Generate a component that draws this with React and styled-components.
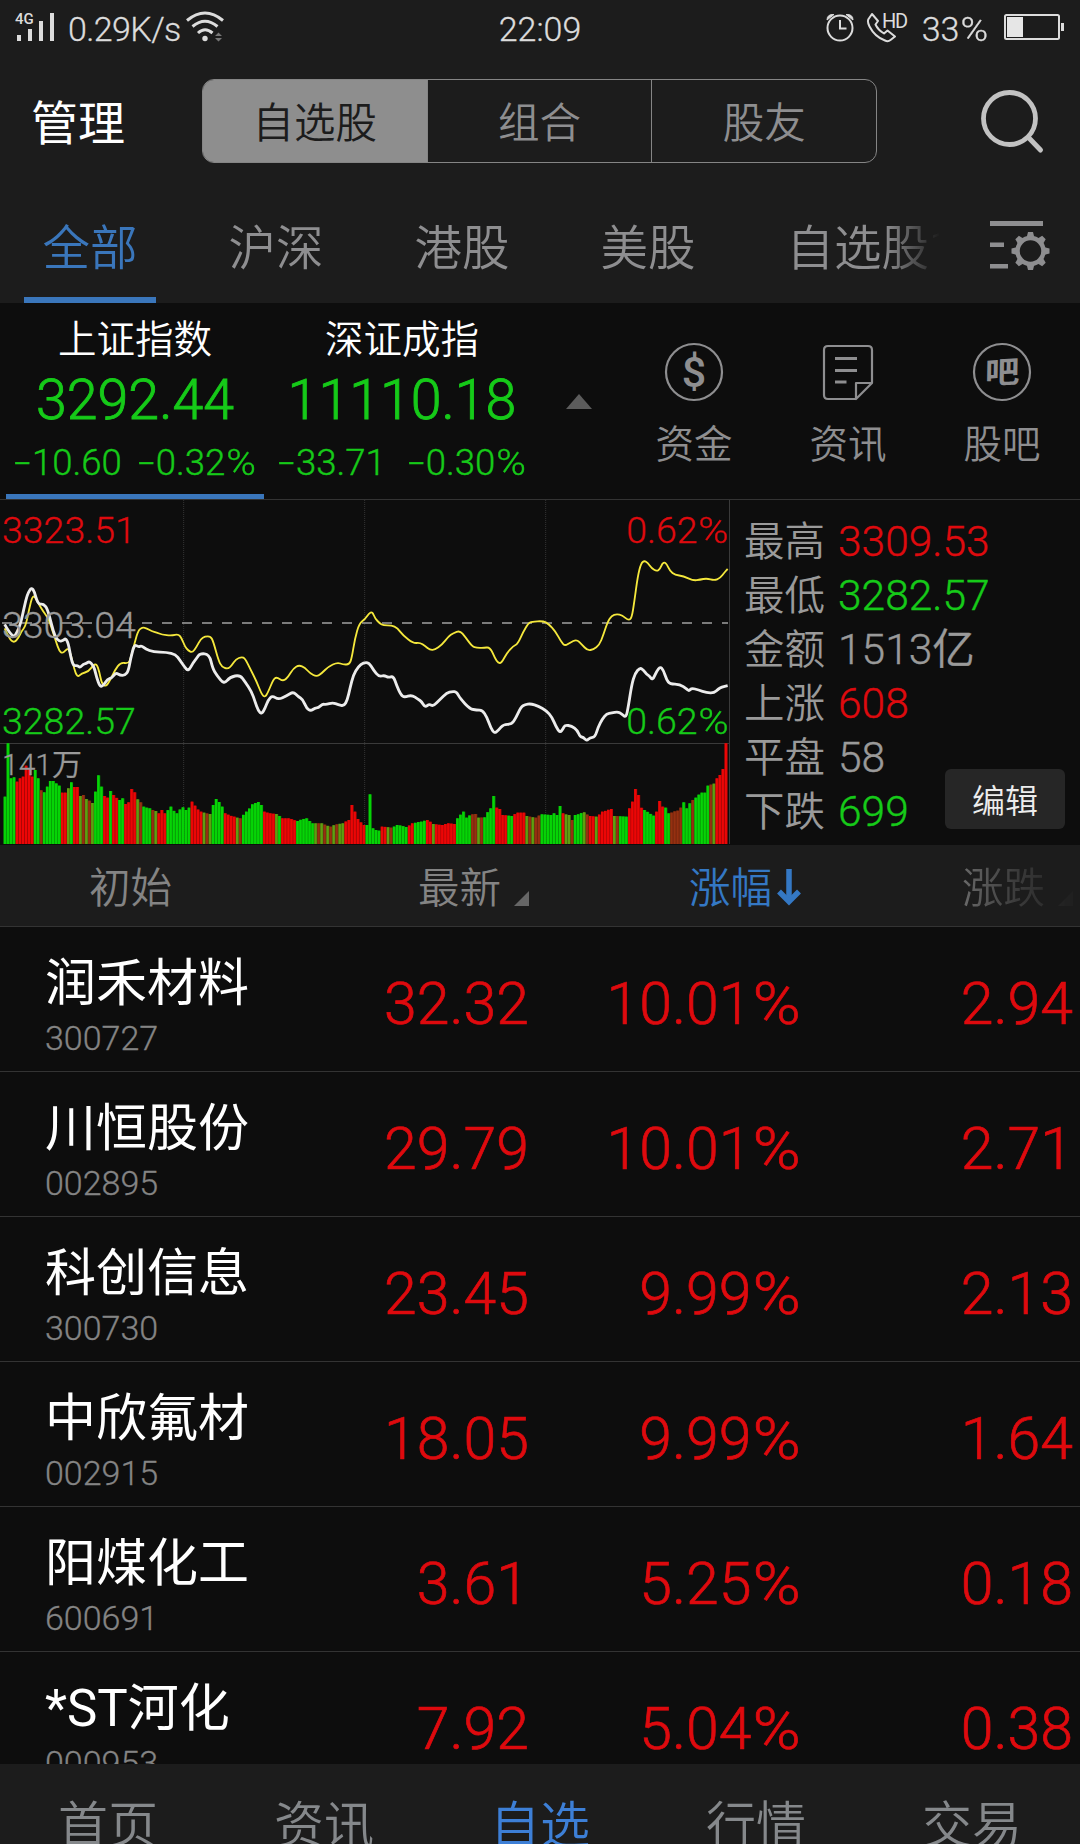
import React from "react";
import styled, { createGlobalStyle } from "styled-components";

const GlobalStyle = createGlobalStyle`
  * { box-sizing: border-box; }
  body { margin: 0; background: #0d0d0d; overflow: hidden; }
`;

const color = {
  bar: "#1c1c1c",
  body: "#0d0d0d",
  line: "#333333",
  grey: "#8e8e90",
  blue: "#3a76bb",
  red: "#de0a0e",
  green: "#16ca19",
};

const Screen = styled.div`
  width: 1080px;
  height: 1844px;
  display: flex;
  flex-direction: column;
  overflow: hidden;
  background: ${color.body};
  color: #fff;
  font-family: Roboto, "Noto Sans CJK SC", sans-serif;
  font-weight: 350;
  white-space: nowrap;
`;

/* ---------- figures ---------- */

const PercentSign = styled.span`
  display: inline-block;
  margin-left: 0.1em;
  transform: scaleX(1.1);
  transform-origin: 100% 50%;
`;

// Sets the percent sign a little wider than the digits before it.
const Num = ({ children }) =>
  children.endsWith("%") ? (
    <span>{children.slice(0, -1)}<PercentSign>%</PercentSign></span>
  ) : (
    <span>{children}</span>
  );

/* ---------- status bar ---------- */

const StatusBar = styled.div`
  flex: none;
  height: 58px;
  padding: 0 15px;
  display: grid;
  grid-template-columns: 1fr auto 1fr;
  align-items: center;
  background: ${color.bar};
  color: #dcdcdc;
  font-size: 34px;
  line-height: 58px;
  svg { display: block; }
`;

const StatusSide = styled.div`
  display: flex;
  align-items: center;
  justify-content: ${(p) => (p.$end ? "flex-end" : "flex-start")};
`;

const StatusText = styled.span`
  letter-spacing: ${(p) => p.$spacing || 0}px;
  margin: ${(p) => p.$margin || 0};
  -webkit-text-stroke: 0.3px currentColor;
`;

const SignalIcon = () => (
  <svg width="42" height="58" viewBox="0 0 42 58">
    <text x="0" y="24" fontSize="15" fontWeight="500" fill="#dcdcdc">4G</text>
    <g fill="#dcdcdc">
      <rect x="2" y="35" width="4" height="6" />
      <rect x="13" y="29" width="4" height="12" />
      <rect x="24" y="21" width="4" height="20" />
      <rect x="35" y="13" width="4" height="28" />
    </g>
  </svg>
);

const WifiIcon = () => (
  <svg width="40" height="58" viewBox="0 0 40 58" fill="none" stroke="#dcdcdc">
    <path d="M1 20.5Q19 5.500 37 20.5" strokeWidth="3" />
    <path d="M6.500 26.500Q19 16 31.500 26.500" strokeWidth="3" />
    <path d="M12 33Q19 26.500 26.500 33" strokeWidth="3" />
    <circle cx="19" cy="38.500" r="2.700" fill="#dcdcdc" stroke="none" />
    <path d="M29 36l3.500-3.500L36 36zM29 38l3.500 3.500L36 38z" fill="#777" stroke="none" />
  </svg>
);

const AlarmIcon = () => (
  <svg width="30" height="58" viewBox="0 0 30 58" fill="none" stroke="#dcdcdc" strokeWidth="2">
    <circle cx="15" cy="28" r="12.500" />
    <path d="M15 20v8.500h6.500" />
    <path d="M2 20q0-6 7-5.500zM28 20q0-6-7-5.500z" fill="#dcdcdc" strokeWidth="1" />
  </svg>
);

const CallSvg = styled.svg`
  margin: 0 12px 0 11px;
`;

const CallIcon = () => (
  <CallSvg width="44" height="58" viewBox="0 0 44 58" fill="none" stroke="#dcdcdc" strokeWidth="2">
    <path d="M6 14L2.500 19Q1 21.500 3.500 26.500Q9 37 19 40.500Q22 42 24.500 40L29 36.500L21.500 30.500L18 33.500Q12 30 9.500 24.500L12 21z" strokeLinejoin="round" />
    <text x="16" y="28" fontSize="20" fontWeight="400" fill="#dcdcdc" stroke="none" textLength="26">HD</text>
  </CallSvg>
);

const BatteryIcon = () => (
  <svg width="61" height="58" viewBox="0 0 61 58">
    <rect x="1" y="15" width="54" height="24" rx="1.500" fill="none" stroke="#dcdcdc" strokeWidth="2" />
    <rect x="3" y="17" width="16" height="20" fill="#e6e6e6" />
    <rect x="57" y="23" width="3" height="8" fill="#dcdcdc" />
  </svg>
);

/* ---------- header ---------- */

const Header = styled.header`
  flex: none;
  height: 126px;
  padding: 0 35px 0 31px;
  display: flex;
  align-items: center;
  background: ${color.bar};
`;

const Manage = styled.button`
  all: unset;
  width: 171px;
  font-size: 47px;
  font-weight: 400;
  line-height: 60px;
  padding-top: 6px;
`;

const Segments = styled.div`
  display: flex;
  width: 675px;
  height: 84px;
  border: 1px solid #858585;
  border-radius: 12px;
  overflow: hidden;
`;

const Segment = styled.div`
  flex: 1;
  display: flex;
  align-items: center;
  justify-content: center;
  padding-bottom: 2px;
  font-size: 41.500px;
  color: ${(p) => (p.$active ? "#1c1c1c" : color.grey)};
  background: ${(p) => (p.$active ? "#8e8e8e" : "transparent")};
  & + & { border-left: 1px solid #858585; }
`;

const SearchButton = styled.button`
  all: unset;
  margin-left: auto;
  svg { display: block; }
`;

const SearchIcon = () => (
  <svg width="66" height="66" viewBox="0 0 66 66" fill="none" stroke="#c2c2c2">
    <circle cx="30.500" cy="30.500" r="26" strokeWidth="4.800" />
    <path d="M49.500 49.500L61.500 62" strokeWidth="5" strokeLinecap="round" />
  </svg>
);

/* ---------- market tabs ---------- */

const TabBar = styled.nav`
  flex: none;
  height: 119px;
  display: flex;
  justify-content: space-between;
  background: ${color.bar};
`;

const Tabs = styled.div`
  width: 945px;
  display: flex;
  overflow: hidden;
  mask-image: linear-gradient(to right, #000 885px, transparent 940px);
`;

const Tab = styled.div`
  flex: none;
  display: flex;
  flex-direction: column;
  align-items: center;
  padding: 0 27px;
  font-size: 47.500px;
  color: ${(p) => (p.$active ? color.blue : color.grey)};
  &:first-child { margin-left: -3px; }
  span { flex: 1; padding: 17px 18.5px 0; line-height: 96px; }
  &::after {
    content: "";
    flex: none;
    align-self: stretch;
    height: 6px;
    background: ${(p) => (p.$active ? color.blue : "transparent")};
  }
`;

const TabSettings = styled.div`
  width: 90px;
  padding-top: 35px;
`;

const teeth = [0, 45, 90, 135, 180, 225, 270, 315];

const ListSettingsIcon = () => (
  <svg width="60" height="54" viewBox="0 0 60 54">
    <g fill={color.grey}>
      <rect x="0" y="2" width="53" height="5" />
      <rect x="0" y="23.500" width="14" height="4.500" />
      <rect x="0" y="45" width="18" height="4.500" />
      {teeth.map((a) => (
        <path key={a} d="M36.500 19l1.500-6h5l1.500 6z" transform={`rotate(${a} 40.500 32)`} />
      ))}
    </g>
    <circle cx="40.500" cy="32" r="13" fill="none" stroke={color.grey} strokeWidth="4.500" />
  </svg>
);

/* ---------- index summary ---------- */

const Summary = styled.section`
  flex: none;
  height: 196px;
  padding-left: 6px;
  display: flex;
`;

const IndexCard = styled.div`
  width: 258px;
  margin-right: 9px;
  padding-top: 9px;
  display: flex;
  flex-direction: column;
  align-items: center;
  color: ${color.green};
  border-bottom: 5px solid ${(p) => (p.$active ? color.blue : "transparent")};
`;

const IndexName = styled.div`
  color: #fff;
  font-size: 38.500px;
  line-height: 56px;
  height: 54px;
`;

const IndexValue = styled.div`
  font-size: 55.500px;
  line-height: 70px;
  -webkit-text-stroke: 0.9px currentColor;
`;

const IndexDelta = styled.div`
  display: flex;
  gap: ${(p) => p.$gap}px;
  font-size: 36.500px;
  line-height: 53px;
  -webkit-text-stroke: 0.4px currentColor;
`;

const Minus = styled.i`
  display: inline-block;
  width: 18px;
  font-style: normal;
  transform: scaleX(1.6);
  transform-origin: 0 50%;
`;

const Toggle = styled.div`
  width: 77px;
  display: flex;
  align-items: center;
  justify-content: center;
  padding-top: 1px;
  &::after {
    content: "";
    border: solid transparent;
    border-width: 0 13.5px 15px;
    border-bottom-color: #5c5c5c;
  }
`;

const Actions = styled.div`
  display: flex;
`;

const Action = styled.div`
  width: 154px;
  padding-top: 39px;
  display: flex;
  flex-direction: column;
  align-items: center;
  color: ${color.grey};
  font-size: 38.500px;
  line-height: 50px;
  svg { display: block; margin-bottom: 18px; }
`;

const MoneyIcon = () => (
  <svg width="60" height="60" viewBox="0 0 60 60">
    <circle cx="30" cy="30" r="28" fill="none" stroke={color.grey} strokeWidth="2.200" />
    <text x="30" y="45" fontSize="43" fontWeight="500" textAnchor="middle" fill={color.grey}>$</text>
  </svg>
);

const NewsIcon = () => (
  <svg width="60" height="60" viewBox="0 0 60 60" fill="none" stroke={color.grey} strokeWidth="2.200">
    <path d="M38 57H10Q6 57 6 53V8Q6 4 10 4H50Q54 4 54 8V41L38 57V41H54" strokeLinejoin="round" />
    <path d="M17 16.500H39M17 28.500H39M17 40H28.500" strokeWidth="3" />
  </svg>
);

const ForumIcon = () => (
  <svg width="60" height="60" viewBox="0 0 60 60">
    <circle cx="30" cy="30" r="28" fill="none" stroke={color.grey} strokeWidth="2.200" />
    <text
      x="0" y="0" fontSize="33" fontWeight="700" textAnchor="middle" fill={color.grey}
      transform="translate(30 41) rotate(-3) skewX(-4) scale(1.050 0.920)"
    >吧</text>
  </svg>
);

/* ---------- chart ---------- */

const ChartSection = styled.section`
  flex: none;
  height: 346px;
  border-top: 1px solid ${color.line};
  display: flex;
`;

const ChartBox = styled.div`
  position: relative;
  width: 730px;
  height: 345px;
  svg { display: block; }
`;

const ChartLabel = styled.span`
  position: absolute;
  top: ${(p) => p.$top}px;
  ${(p) => (p.$right ? "right: 1px" : "left: 2px")};
  font-size: ${(p) => p.$size || 37.5}px;
  line-height: 40px;
  color: ${(p) => p.$color};
  -webkit-text-stroke: 0.3px currentColor;
`;

// Chart coordinates are in thirds of a pixel; the viewBox scales them down.
const indexLine = [
  14,388,25,408,42,427,52,410,62,385,72,340,82,297,95,277,103,290,110,315,117,328,130,327,142,340,155,390,165,425,178,440,
  190,436,197,430,205,445,212,485,220,513,232,511,240,518,250,507,258,506,268,499,278,510,284,522,290,548,300,575,310,572,
  322,553,335,549,348,533,360,541,375,541,385,528,392,490,403,448,415,456,425,452,437,462,460,471,500,472,527,478,540,496,
  553,515,565,529,580,502,590,490,600,475,628,478,638,520,650,540,672,568,690,546,720,540,735,560,755,590,765,620,775,648,
  785,657,795,640,805,614,817,602,835,614,860,602,880,590,895,605,908,613,920,640,932,648,945,639,955,638,968,627,978,629,
  998,623,1015,629,1032,633,1042,615,1050,580,1060,540,1075,515,1090,503,1107,503,1120,525,1137,545,1153,541,1165,548,
  1180,543,1190,572,1203,600,1213,607,1235,600,1255,613,1265,620,1275,637,1288,627,1300,634,1320,613,1340,594,1357,589,
  1370,591,1380,610,1410,642,1430,645,1447,646,1460,665,1473,700,1483,715,1495,706,1510,688,1535,688,1547,670,1563,636,
  1575,629,1592,626,1615,633,1640,648,1655,665,1668,695,1680,714,1690,700,1695,690,1715,693,1732,706,1740,725,1750,727,
  1760,738,1770,728,1785,726,1795,695,1807,672,1820,656,1835,654,1853,650,1865,656,1878,669,1885,635,1895,570,1905,535,
  1920,518,1930,525,1940,538,1948,543,1958,556,1970,528,1981,515,1990,525,2000,555,2010,567,2040,568,2060,582,2067,588,
  2075,579,2095,585,2120,593,2142,594,2155,582,2165,576,2183,572,
];

const averageLine = [
  14,400,28,432,42,443,55,430,65,408,77,393,88,340,97,304,105,305,115,325,130,350,145,370,155,400,168,440,178,468,187,475,
  197,466,205,460,213,480,222,520,232,547,245,535,265,530,280,510,290,507,298,530,305,565,317,575,328,560,345,525,362,502,
  385,506,392,490,405,440,415,405,428,397,440,400,455,409,470,412,485,419,515,422,535,417,545,430,555,455,565,467,577,473,
  590,455,602,432,615,424,632,424,640,440,655,495,665,515,683,522,695,512,708,492,725,486,735,490,750,520,770,560,785,598,
  795,607,805,590,820,553,830,546,850,559,865,545,880,520,897,510,915,518,930,535,950,545,965,535,985,515,1012,502,
  1030,509,1048,508,1055,490,1065,430,1078,385,1095,373,1107,355,1117,350,1125,370,1140,386,1150,391,1175,391,1192,399,
  1210,422,1240,445,1260,443,1275,453,1290,465,1305,464,1325,450,1345,425,1360,414,1380,407,1395,425,1417,455,1430,458,
  1450,459,1470,456,1485,490,1495,505,1505,503,1520,475,1540,453,1553,447,1570,410,1585,385,1595,380,1630,378,1645,386,
  1667,410,1683,440,1695,453,1710,443,1730,433,1745,448,1763,467,1780,463,1798,450,1810,420,1823,380,1835,362,1850,357,
  1867,361,1885,376,1895,370,1903,320,1913,245,1923,205,1933,197,1943,203,1955,220,1970,229,1980,222,1988,203,1998,203,
  2010,228,2025,240,2050,243,2080,257,2100,254,2120,250,2143,256,2160,250,2175,230,2183,222,
];

const volumeTops = [
  15,905,24,745,33,850,42,847,51,860,60,850,69,845,78,812,87,822,96,845,105,825,114,850,123,886,132,892,141,875,150,858,
  160,858,178,872,187,893,196,893,205,880,214,862,223,876,232,876,241,903,250,900,259,912,268,917,277,924,286,890,295,841,
  304,875,313,903,322,908,331,888,340,900,358,915,367,910,376,927,385,922,394,882,403,892,412,913,421,922,430,935,448,940,
  466,948,475,955,484,945,498,955,511,935,529,955,547,937,556,945,565,938,574,920,583,932,601,950,628,957,637,930,648,912,
  657,921,666,935,675,955,700,965,720,970,740,950,760,928,772,921,785,930,793,950,810,955,830,957,850,970,870,970,890,978,
  918,970,940,985,965,985,990,995,1010,988,1030,985,1045,975,1055,930,1065,950,1075,972,1090,990,1099,990,1108,898,
  1117,1000,1125,1005,1140,1007,1150,995,1175,998,1195,990,1220,996,1240,985,1260,980,1285,975,1300,987,1325,990,1345,985,
  1367,987,1375,970,1388,950,1398,968,1415,958,1425,957,1440,968,1455,967,1470,940,1479,903,1488,938,1498,942,1510,960,
  1535,963,1553,953,1570,953,1580,963,1605,968,1625,958,1655,960,1663,955,1670,960,1677,933,1686,955,1705,960,1713,975,
  1730,960,1750,952,1770,963,1790,965,1810,950,1832,942,1845,963,1880,965,1890,940,1895,920,1903,882,1912,900,1920,935,
  1935,945,1960,962,1970,950,1976,918,1985,935,1995,938,2010,955,2030,947,2040,938,2048,922,2057,940,2070,925,2085,908,
  2105,893,2117,893,2128,872,2138,866,2148,850,2158,840,2165,822,2173,798,2182,745,
];

// Each run is the bar colour followed by the x at which the run ends.
const volumeRuns = `g46 r100 g120 b129 g183 r201 o210 g219 r237 o246 b255 o264 b273 o282 g309 r327 g336 r354 g372 r408
o417 b426 g453 b462 o471 r498 g570 r606 o615 b624 o633 g669 r705 o714 b723 g786 r822 o831 g840 r885 g939 o948 b957 o966
b975 o984 b1000 o1010 b1020 o1030 r1100 g1140 r1158 o1167 b1176 g1222 r1240 g1275 r1293 o1302 r1365 g1417 b1428 o1437
b1447 g1483 r1520 g1536 r1575 o1584 b1595 o1603 b1621 g1683 r1698 o1708 b1717 g1745 o1755 b1764 r1782 o1791 r1835 o1845
b1853 g1881 r1927 g1963 r1990 g2015 b2025 o2033 b2043 g2070 b2080 g2125 b2134 o2143 r2170 o2177 r2200`
  .split(/\s+/)
  .map((run) => ({ kind: run[0], end: Number(run.slice(1)) }));

const volumeFill = { g: "#06d406", r: "#ec0606", b: "#963010", o: "#5f9f10" };

const smooth = (flat) => {
  let d = `M${flat[0]} ${flat[1]}`;
  for (let i = 2; i < flat.length - 2; i += 2) {
    d += `Q${flat[i]} ${flat[i + 1]} ${(flat[i] + flat[i + 2]) / 2} ${(flat[i + 1] + flat[i + 3]) / 2}`;
  }
  return `${d}L${flat[flat.length - 2]} ${flat[flat.length - 1]}`;
};

const topAt = (x) => {
  for (let i = 0; i < volumeTops.length; i += 2) {
    if (Math.abs(volumeTops[i] - x) < 4.5) return volumeTops[i + 1];
  }
  for (let i = 2; i < volumeTops.length; i += 2) {
    if (volumeTops[i] >= x) {
      const t = (x - volumeTops[i - 2]) / (volumeTops[i] - volumeTops[i - 2]);
      return volumeTops[i - 1] + t * (volumeTops[i + 1] - volumeTops[i - 1]);
    }
  }
  return volumeTops[volumeTops.length - 1];
};

const BAR = 9.05;
const volumeBars = Array.from({ length: 240 }, (_, i) => {
  const x = 11 + i * BAR;
  const mid = x + BAR / 2;
  return { x, top: topAt(mid), fill: volumeFill[volumeRuns.find((r) => mid < r.end).kind] };
});

const IntradayChart = () => (
  <svg width="730" height="345" viewBox="0 15 2190 1035" fill="none">
    {[551, 1094, 1637].map((x) => (
      <path key={x} d={`M${x} 15V1047`} stroke="#333" strokeWidth="3" strokeDasharray="3 3" />
    ))}
    <path d="M2188.500 15V1047" stroke="#3a3a3a" strokeWidth="3" />
    <path d="M0 745.500H2188" stroke="#3a3a3a" strokeWidth="3" />
    <path d="M6 384H2184" stroke="#a0a0a0" strokeWidth="4.500" strokeDasharray="30 30" />
    {volumeBars.map((b) => (
      <g key={b.x} fill={b.fill}>
        <rect x={b.x} y={b.top} width={BAR} height={1047 - b.top} opacity="0.72" />
        <rect x={b.x} y={b.top} width={BAR - 2.2} height={1047 - b.top} />
      </g>
    ))}
    <path d={smooth(averageLine)} stroke="#f5e83c" strokeWidth="5.500" strokeLinejoin="round" />
    <path d={smooth(indexLine)} stroke="#ececec" strokeWidth="8.500" strokeLinejoin="round" />
  </svg>
);

const Stats = styled.div`
  flex: 1;
  display: flex;
  align-items: flex-end;
  justify-content: space-between;
  padding: 15px 15px 0 14px;
`;

const StatList = styled.dl`
  margin: 0;
  align-self: flex-start;
`;

const Stat = styled.div`
  display: flex;
  align-items: center;
  height: 54px;
  dt { width: 94px; font-size: 40.500px; line-height: 54px; color: #9a9a9a; }
  dd {
    margin: 0;
    font-size: 42.500px;
    line-height: 54px;
    color: ${(p) => p.$color || "#9a9a9a"};
    -webkit-text-stroke: 0.4px currentColor;
  }
`;

const EditButton = styled.button`
  all: unset;
  width: 120px;
  height: 60px;
  margin: 0 0 16px -60px;
  border-radius: 6px;
  background: #262626;
  color: #ededed;
  font-size: 33px;
  line-height: 65px;
  text-align: center;
`;

/* ---------- stock table ---------- */

const columns = "257px 272px 272px 272px";

const TableHead = styled.div`
  flex: none;
  height: 82px;
  display: grid;
  grid-template-columns: ${columns};
  background: ${color.bar};
  border-bottom: 1px solid ${color.line};
  color: #848484;
  font-size: 41.500px;
  line-height: 87px;
`;

const HeadCell = styled.div`
  height: 81px;
  display: flex;
  align-items: flex-start;
  justify-content: ${(p) => (p.$first ? "flex-start" : "flex-end")};
  padding-left: ${(p) => (p.$first ? 89 : 0)}px;
  color: ${(p) => (p.$active ? "#3478c4" : "inherit")};
  ${(p) => p.$faded && "mask-image: linear-gradient(to right, #000 130px, rgba(0,0,0,.3) 215px, rgba(0,0,0,.05) 272px);"}
`;

const SortMark = styled.i`
  margin: 46px 0 0 13px;
  border: solid transparent;
  border-width: 0 0 15px 15px;
  border-bottom-color: #666;
`;

const ArrowSvg = styled.svg`
  margin-left: 5px;
`;

const SortArrow = () => (
  <ArrowSvg width="24" height="81" viewBox="0 0 24 81" fill="none" stroke="#3478c4" strokeWidth="5.500">
    <path d="M12 24V56" />
    <path d="M2 46.500L12 56.500L22 46.500" />
  </ArrowSvg>
);

const StockList = styled.div`
  flex: 1;
  min-height: 0;
  overflow: hidden;
`;

const StockRow = styled.div`
  height: 145px;
  display: grid;
  grid-template-columns: ${columns};
  border-bottom: 1px solid ${color.line};
`;

const StockName = styled.div`
  padding: 27px 0 0 45px;
  font-size: 51px;
  line-height: 60px;
  font-weight: 400;
`;

const StockCode = styled.div`
  margin-top: -1px;
  color: #848484;
  font-size: 34px;
  font-weight: 350;
  line-height: 50px;
  -webkit-text-stroke: 0.3px currentColor;
`;

const Figure = styled.div`
  display: flex;
  align-items: center;
  justify-content: flex-end;
  padding-top: 9px;
  color: ${color.red};
  font-size: 59px;
  -webkit-text-stroke: 0.7px currentColor;
`;

/* ---------- bottom navigation ---------- */

const BottomNav = styled.nav`
  flex: none;
  height: 80px;
  display: flex;
  overflow: hidden;
  background: ${color.bar};
`;

const NavItem = styled.div`
  flex: 1;
  text-align: center;
  font-size: 50px;
  line-height: 124px;
  color: ${(p) => (p.$active ? "#3d7fd6" : "#85888b")};
`;

const indexes = [
  { name: "上证指数", value: "3292.44", change: "10.60", pct: "0.32%", gap: 16, active: true },
  { name: "深证成指", value: "11110.18", change: "33.71", pct: "0.30%", gap: 22 },
];

const stats = [
  ["最高", "3309.53", color.red],
  ["最低", "3282.57", color.green],
  ["金额", "1513亿"],
  ["上涨", "608", color.red],
  ["平盘", "58"],
  ["下跌", "699", color.green],
];

const stocks = [
  ["润禾材料", "300727", "32.32", "10.01%", "2.94"],
  ["川恒股份", "002895", "29.79", "10.01%", "2.71"],
  ["科创信息", "300730", "23.45", "9.99%", "2.13"],
  ["中欣氟材", "002915", "18.05", "9.99%", "1.64"],
  ["阳煤化工", "600691", "3.61", "5.25%", "0.18"],
  ["*ST河化", "000953", "7.92", "5.04%", "0.38"],
];

export default function App() {
  return (
    <Screen>
      <GlobalStyle />
      <StatusBar>
        <StatusSide>
          <SignalIcon />
          <StatusText $spacing={-0.6} $margin="0 5px 0 11px">0.29K/s</StatusText>
          <WifiIcon />
        </StatusSide>
        <StatusText>22:09</StatusText>
        <StatusSide $end>
          <AlarmIcon />
          <CallIcon />
          <StatusText $margin="0 16px 0 0"><Num>33%</Num></StatusText>
          <BatteryIcon />
        </StatusSide>
      </StatusBar>

      <Header>
        <Manage>管理</Manage>
        <Segments>
          <Segment $active>自选股</Segment>
          <Segment>组合</Segment>
          <Segment>股友</Segment>
        </Segments>
        <SearchButton aria-label="搜索"><SearchIcon /></SearchButton>
      </Header>

      <TabBar>
        <Tabs>
          {["全部", "沪深", "港股", "美股", "自选股1"].map((t, i) => (
            <Tab key={t} $active={i === 0}><span>{t}</span></Tab>
          ))}
        </Tabs>
        <TabSettings><ListSettingsIcon /></TabSettings>
      </TabBar>

      <Summary>
        {indexes.map((x) => (
          <IndexCard key={x.name} $active={x.active}>
            <IndexName>{x.name}</IndexName>
            <IndexValue>{x.value}</IndexValue>
            <IndexDelta $gap={x.gap}>
              <span><Minus>-</Minus>{x.change}</span>
              <span><Minus>-</Minus><Num>{x.pct}</Num></span>
            </IndexDelta>
          </IndexCard>
        ))}
        <Toggle />
        <Actions>
          <Action><MoneyIcon />资金</Action>
          <Action><NewsIcon />资讯</Action>
          <Action><ForumIcon />股吧</Action>
        </Actions>
      </Summary>

      <ChartSection>
        <ChartBox>
          <IntradayChart />
          <ChartLabel $top={10} $color={color.red}>3323.51</ChartLabel>
          <ChartLabel $top={105} $color="#9a9a9a">3303.04</ChartLabel>
          <ChartLabel $top={201} $color={color.green}>3282.57</ChartLabel>
          <ChartLabel $top={10} $color={color.red} $right><Num>0.62%</Num></ChartLabel>
          <ChartLabel $top={201} $color={color.green} $right><Num>0.62%</Num></ChartLabel>
          <ChartLabel $top={245} $color="#9a9a9a" $size={30}>141万</ChartLabel>
        </ChartBox>
        <Stats>
          <StatList>
            {stats.map(([label, value, c]) => (
              <Stat key={label} $color={c}><dt>{label}</dt><dd>{value}</dd></Stat>
            ))}
          </StatList>
          <EditButton>编辑</EditButton>
        </Stats>
      </ChartSection>

      <TableHead>
        <HeadCell $first>初始</HeadCell>
        <HeadCell>最新<SortMark /></HeadCell>
        <HeadCell $active>涨幅<SortArrow /></HeadCell>
        <HeadCell $faded>涨跌<SortMark /></HeadCell>
      </TableHead>

      <StockList>
        {stocks.map(([name, code, price, pct, change]) => (
          <StockRow key={code}>
            <StockName>{name}<StockCode>{code}</StockCode></StockName>
            <Figure><Num>{price}</Num></Figure>
            <Figure><Num>{pct}</Num></Figure>
            <Figure><Num>{change}</Num></Figure>
          </StockRow>
        ))}
      </StockList>

      <BottomNav>
        {["首页", "资讯", "自选", "行情", "交易"].map((t) => (
          <NavItem key={t} $active={t === "自选"}>{t}</NavItem>
        ))}
      </BottomNav>
    </Screen>
  );
}
